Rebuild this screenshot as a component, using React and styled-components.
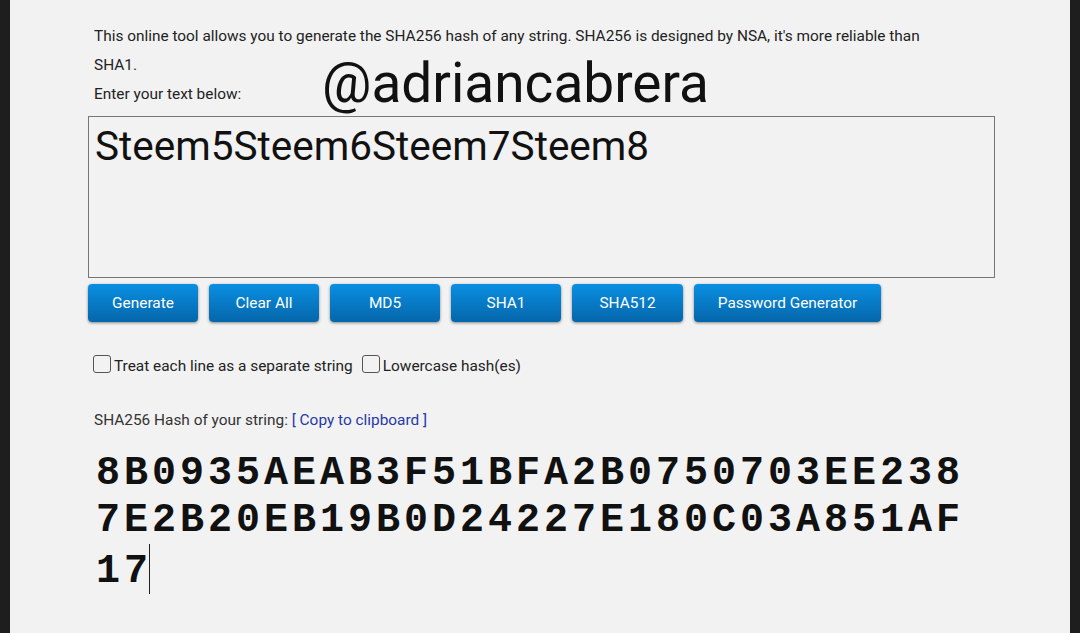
import React from "react";
import styled, { createGlobalStyle } from "styled-components";

const GlobalStyle = createGlobalStyle`
  html, body {
    margin: 0;
    padding: 0;
    background: #1e1e1e;
  }
  body {
    font-family: Roboto, "Liberation Sans", sans-serif;
  }
`;

const Screen = styled.div`
  display: flex;
  width: 1080px;
  height: 633px;
  overflow: hidden;
`;

const Edge = styled.div`
  width: 10px;
  flex: none;
  background: #1e1e1e;
`;

const Page = styled.main`
  position: relative;
  flex: 1;
  background: #f2f2f2;
  padding: 22px 0 0 78px;
  color: #222;
`;

const Intro = styled.p`
  margin: 0;
  width: 850px;
  padding-left: 6px;
  font-size: 15.4px;
  line-height: 29px;
`;

const Watermark = styled.div`
  position: absolute;
  left: 312px;
  top: 51px;
  font-size: 55px;
  line-height: 64px;
  color: #111;
`;

const Input = styled.div`
  box-sizing: border-box;
  width: 907px;
  height: 162px;
  margin-top: 7px;
  border: 1px solid #777;
  padding: 5px 6px;
  font-size: 40.5px;
  line-height: 48px;
  color: #111;
`;

const Toolbar = styled.div`
  display: flex;
  gap: 11px;
  margin-top: 6px;
`;

const Button = styled.button`
  height: 38px;
  width: ${(p) => p.$w || 110}px;
  border: none;
  border-radius: 4px;
  background: linear-gradient(#0a8fe2, #0566aa);
  box-shadow: 0 1px 3px rgba(0, 0, 0, 0.45);
  color: #fff;
  font-family: Roboto, "Liberation Sans", sans-serif;
  font-size: 15.4px;
  padding: 0;
`;

const Options = styled.div`
  display: flex;
  align-items: center;
  margin-top: 35px;
  padding-left: 5px;
  font-size: 15.4px;
  color: #222;
`;

const Option = styled.label`
  display: flex;
  align-items: center;
  margin-right: 9px;
`;

const Box = styled.span`
  box-sizing: border-box;
  width: 18px;
  height: 18px;
  border: 1px solid #555;
  border-radius: 3px;
  margin-right: 3px;
  margin-top: -4px;
`;

const Label = styled.div`
  margin-top: 36px;
  padding-left: 6px;
  font-size: 15.4px;
  color: #333;
`;

const Link = styled.span`
  color: #2738a8;
`;

const Hash = styled.div`
  width: 880px;
  margin-top: 21px;
  padding-left: 8px;
  font-family: "Liberation Mono", "Courier New", monospace;
  font-weight: bold;
  font-size: 40px;
  letter-spacing: 4px;
  line-height: 47px;
  color: #111;
  word-break: break-all;
`;

const Caret = styled.span`
  display: inline-block;
  width: 0;
  height: 50px;
  margin-left: -3px;
  border-left: 1.5px solid #222;
  vertical-align: -12px;
`;

const buttons = [
  ["Generate", 110],
  ["Clear All", 110],
  ["MD5", 110],
  ["SHA1", 110],
  ["SHA512", 111],
  ["Password Generator", 187],
];

export default function App() {
  return (
    <>
      <GlobalStyle />
      <Screen>
        <Edge />
        <Page>
          <Intro>
            This online tool allows you to generate the SHA256 hash of any string. SHA256 is designed by
            NSA, it's more reliable than SHA1.
            <br />
            Enter your text below:
          </Intro>
          <Watermark>@adriancabrera</Watermark>
          <Input>Steem5Steem6Steem7Steem8</Input>
          <Toolbar>
            {buttons.map(([label, w]) => (
              <Button key={label} $w={w}>
                {label}
              </Button>
            ))}
          </Toolbar>
          <Options>
            <Option>
              <Box />
              Treat each line as a separate string
            </Option>
            <Option>
              <Box />
              Lowercase hash(es)
            </Option>
          </Options>
          <Label>
            SHA256 Hash of your string: <Link>[ Copy to clipboard ]</Link>
          </Label>
          <Hash>
            8B0935AEAB3F51BFA2B0750703EE2387E2B20EB19B0D24227E180C03A851AF17
            <Caret />
          </Hash>
        </Page>
        <Edge />
      </Screen>
    </>
  );
}
